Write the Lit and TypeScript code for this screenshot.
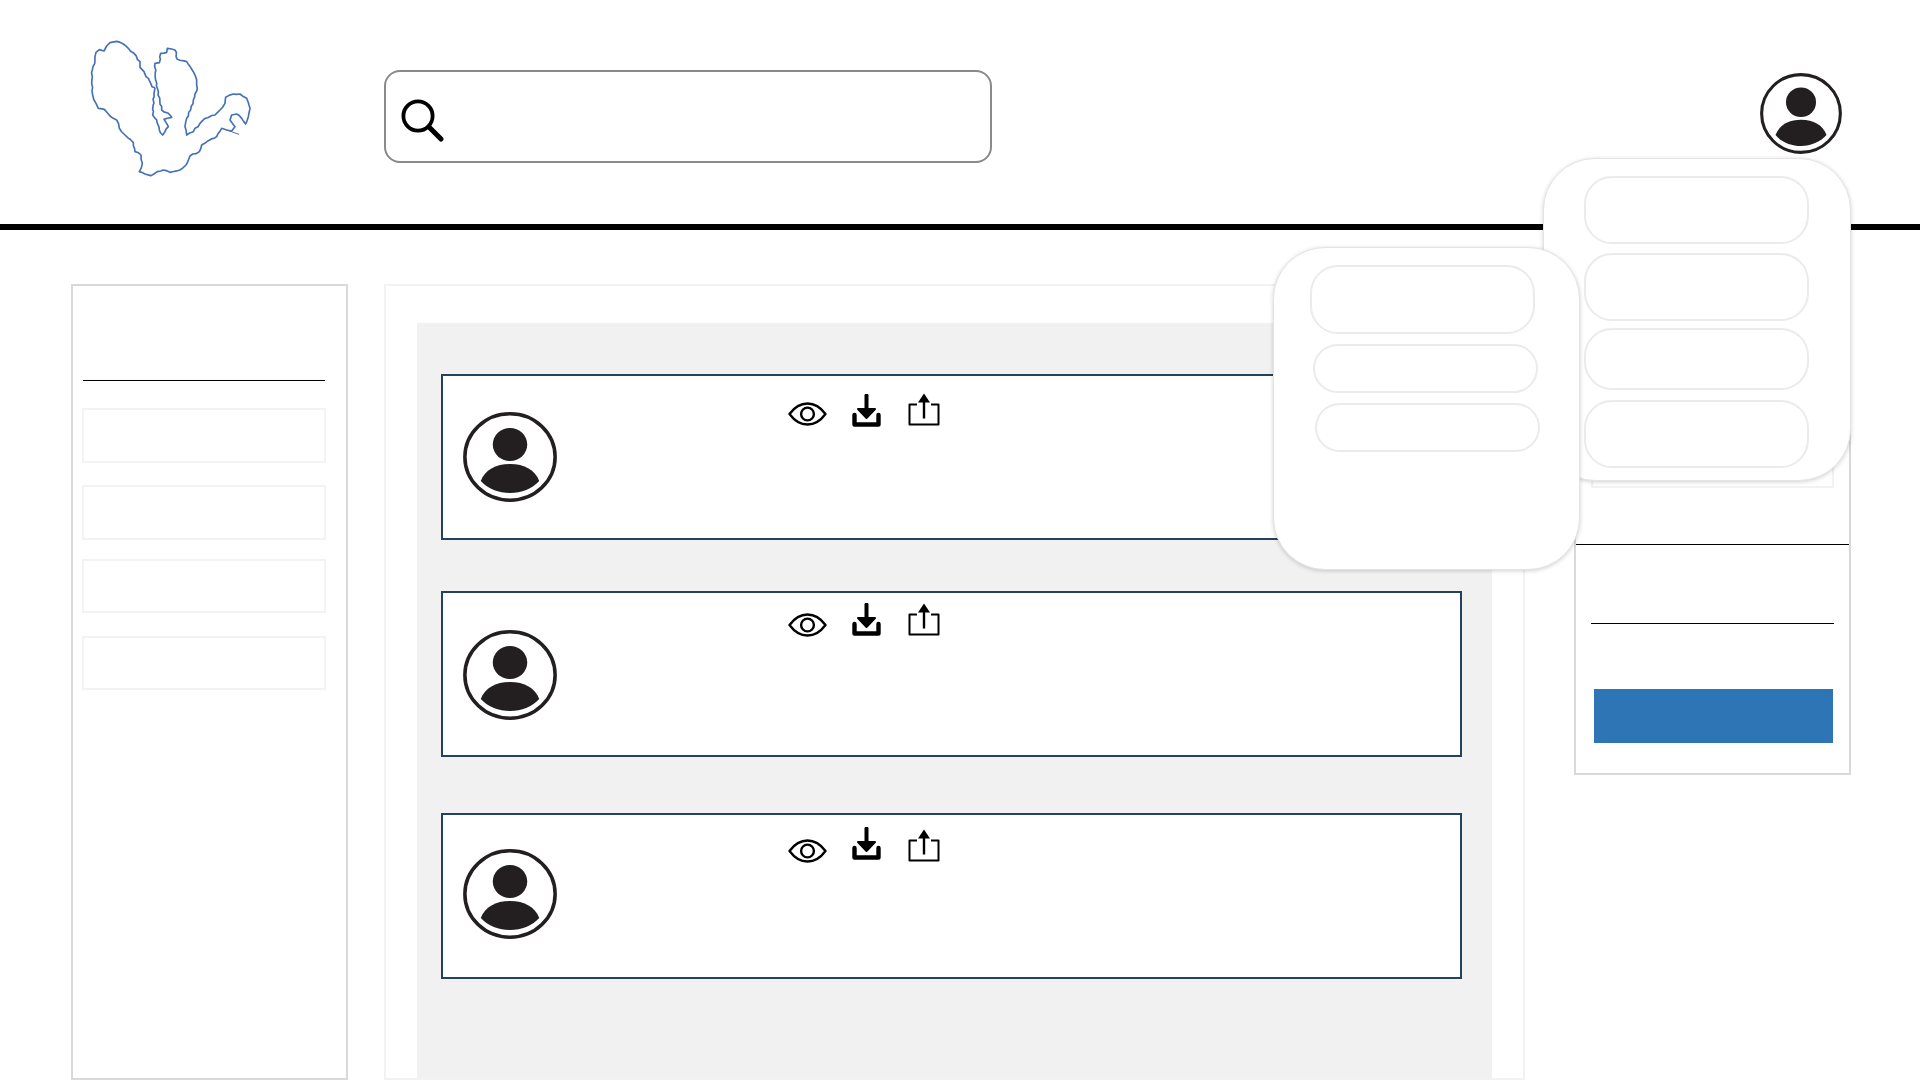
import { LitElement, html, css, svg } from 'lit';
import { customElement } from 'lit/decorators.js';

// outline traced off the reference, in 3x crop coordinates
const LOGO_POINTS: [number, number][] = (
  '285,203 276,200 272,190 265,175 258,170 252,155 240,142 240,125 232,118 222,100 205,85 190,72 170,64 150,68 140,78 132,93 118,89 108,97 105,122 97,150 95,190 98,225 108,250 115,265 133,268 150,288 170,300 178,325 195,345 220,368 225,395 243,405 247,430 238,455 255,462 272,467 292,455 310,450 330,457 360,450 378,435 390,408 418,395 425,375 445,362 470,350 485,325 500,330 515,333 525,320 510,300 515,285 530,282 545,295 557,312 565,290 570,265 560,235 540,222 520,222 497,232 495,250 480,270 465,285 435,295 420,310 400,335 380,345 375,320 380,295 392,270 400,240 412,205 410,180 400,155 380,125 352,118 345,90 322,85 320,97 302,100 298,128 285,130 287,180 305,270 330,285 335,292 312,298 325,320 315,335 308,345 298,330 290,300 278,285 282,220 285,203'
)
  .split(' ')
  .map((p) => p.split(',').map(Number) as [number, number]);

// the logo edge is rough in the reference, so break long segments up with a small wobble
function roughen(points: [number, number][]) {
  const out: string[] = [];
  points.forEach(([x, y], i) => {
    out.push(`${x},${y}`);
    const next = points[i + 1];
    if (!next) return;
    const steps = Math.floor(Math.hypot(next[0] - x, next[1] - y) / 9);
    for (let s = 1; s < steps; s++) {
      const t = s / steps;
      const wx = Math.sin(i * 3.1 + s * 2.3) * 1.8;
      const wy = Math.cos(i * 1.7 + s * 2.9) * 1.8;
      out.push(`${(x + (next[0] - x) * t + wx).toFixed(1)},${(y + (next[1] - y) * t + wy).toFixed(1)}`);
    }
  });
  return out.join(' ');
}

const logoIcon = svg`<svg class="logo" viewBox="0 0 660 510">
  <polyline points=${roughen(LOGO_POINTS)} fill="none" stroke="#4472b8" stroke-width="5" stroke-linejoin="round"></polyline>
  <path d="M500 330L537 343" fill="none" stroke="#4472b8" stroke-width="3"></path>
</svg>`;

const searchIcon = svg`<svg class="search-icon" viewBox="0 0 44 44">
  <circle cx="18" cy="18" r="14.6" fill="none" stroke="#000" stroke-width="3.8"></circle>
  <path d="M29 29L41 41" stroke="#000" stroke-width="5" stroke-linecap="round"></path>
</svg>`;

const avatarIcon = svg`<svg class="avatar-svg" viewBox="0 0 90 90" preserveAspectRatio="none">
  <circle cx="45" cy="45" r="43.2" fill="#fff" stroke="#231f20" stroke-width="3.4"></circle>
  <circle cx="45" cy="32.5" r="16.5" fill="#231f20"></circle>
  <path d="M17 69C21 58 31 52 45 52C59 52 69 58 73 69C66 77 56 81 45 81C34 81 24 77 17 69Z" fill="#231f20"></path>
</svg>`;

const eyeIcon = (top: number) => svg`<svg class="eye" style="margin-top:${top}px" viewBox="0 0 39 24">
  <path d="M1.5 12C7 4.5 13 1.5 19.5 1.5C26 1.5 32 4.5 37.5 12C32 19.5 26 22.5 19.5 22.5C13 22.5 7 19.5 1.5 12Z" fill="none" stroke="#000" stroke-width="2.4" stroke-linejoin="round"></path>
  <circle cx="19.5" cy="12" r="6.4" fill="none" stroke="#000" stroke-width="2.4"></circle>
</svg>`;

const downloadIcon = svg`<svg class="download" viewBox="0 0 29 33">
  <path d="M14.5 1.5V20" stroke="#000" stroke-width="4" stroke-linecap="round"></path>
  <path d="M6 15L14.5 24L23 15Z" fill="#000" stroke="#000" stroke-width="2" stroke-linejoin="round"></path>
  <path d="M2.5 21V30.5H26.5V21" fill="none" stroke="#000" stroke-width="4.4" stroke-linecap="round" stroke-linejoin="round"></path>
</svg>`;

const shareIcon = (top: number) => svg`<svg class="share" style="margin-top:${top}px" viewBox="0 0 32 33">
  <path d="M9 11.5H1.5V31.5H30.5V11.5H23" fill="none" stroke="#000" stroke-width="2" stroke-linejoin="round"></path>
  <path d="M16 8V25.5" stroke="#000" stroke-width="2.4"></path>
  <path d="M16 0.5L22 9.5H10Z" fill="#000"></path>
</svg>`;

@customElement('app-root')
export class AppRoot extends LitElement {
  static styles = css`
    :host {
      display: block;
      position: relative;
      width: 1920px;
      height: 1080px;
      overflow: hidden;
      background: #fff;
      font-family: 'Liberation Sans', sans-serif;
    }

    .topbar {
      box-sizing: border-box;
      display: flex;
      align-items: flex-start;
      height: 230px;
      padding: 20px 78px 0 60px;
      border-bottom: 6px solid #000;
    }

    .logo {
      flex: none;
      width: 220px;
      height: 170px;
    }

    .search {
      box-sizing: border-box;
      display: flex;
      align-items: center;
      width: 608px;
      height: 93px;
      margin: 50px 0 0 104px;
      padding: 6px 0 0 14px;
      background: #fff;
      border: 2px solid #8a8a8a;
      border-radius: 16px;
    }

    .search-icon {
      width: 44px;
      height: 44px;
    }

    .me {
      width: 82px;
      height: 81px;
      margin: 53px 0 0 auto;
    }

    .avatar-svg {
      display: block;
      width: 100%;
      height: 100%;
    }

    .content {
      box-sizing: border-box;
      display: flex;
      align-items: flex-start;
      height: 850px;
      padding: 54px 0 0 71px;
    }

    .sidebar,
    .summary {
      box-sizing: border-box;
      flex: none;
      width: 277px;
      background: #fff;
      border: 2px solid #d9d9d9;
    }

    .sidebar {
      height: 796px;
      padding: 94px 20px 0 9px;
    }

    .rule {
      height: 1px;
      background: #000;
    }

    .sidebar .rule {
      margin: 0 1px;
    }

    .filters {
      display: flex;
      flex-direction: column;
      margin-top: 27px;
    }

    .filter {
      box-sizing: border-box;
      height: 55px;
      border: 2px solid #f3f3f3;
    }

    .filter:nth-child(2) {
      margin-top: 22px;
    }

    .filter:nth-child(3) {
      margin-top: 19px;
      height: 54px;
    }

    .filter:nth-child(4) {
      margin-top: 23px;
      height: 54px;
    }

    .main {
      box-sizing: border-box;
      flex: none;
      width: 1141px;
      height: 796px;
      margin-left: 36px;
      padding: 37px 31px 0;
      border: 2px solid #f2f2f2;
    }

    .well {
      box-sizing: border-box;
      display: flex;
      flex-direction: column;
      gap: 51px;
      height: 100%;
      padding: 51px 30px 0 24px;
      background: #f1f1f1;
    }

    .row {
      box-sizing: border-box;
      flex: none;
      display: flex;
      align-items: flex-start;
      height: 166px;
      padding-left: 20px;
      background: #fff;
      border: 2px solid #24425f;
    }

    .row:nth-child(3) {
      margin-top: 5px;
    }

    .row-avatar {
      flex: none;
      width: 94px;
      height: 90px;
    }

    .actions {
      display: flex;
      align-items: flex-start;
      margin-left: 231px;
    }

    .eye {
      width: 39px;
      height: 24px;
    }

    .download {
      width: 29px;
      height: 33px;
      margin-left: 25px;
    }

    .share {
      width: 32px;
      height: 33px;
      margin-left: 27px;
    }

    .summary {
      height: 491px;
      margin-left: 49px;
      padding-top: 146px;
    }

    .summary-box {
      box-sizing: border-box;
      height: 56px;
      margin: 0 15px;
      border: 2px solid #f2f2f2;
    }

    .summary-rule {
      margin-top: 56px;
    }

    .summary-inner {
      padding: 78px 15px 0;
    }

    .summary-action {
      height: 54px;
      margin: 65px 1px 0 3px;
      background: #2e75b6;
    }

    .popup {
      position: absolute;
      box-sizing: border-box;
      background: #fff;
      border: 1px solid #e4e4e4;
      border-radius: 52px;
      box-shadow: 0 1px 4px rgba(0, 0, 0, 0.18);
    }

    .popup-account {
      left: 1543px;
      top: 158px;
      width: 308px;
      height: 323px;
    }

    .popup-row {
      left: 1273px;
      top: 247px;
      width: 307px;
      height: 323px;
    }

    .pill {
      position: absolute;
      box-sizing: border-box;
      width: 225px;
      background: #fff;
      border: 2px solid #ebebeb;
      border-radius: 28px;
    }
  `;

  // icons and avatar sit at a different height in each row of the reference
  private rows = [
    { avatarTop: 36, iconTop: 18, eyeTop: 8, shareTop: -1 },
    { avatarTop: 37, iconTop: 10, eyeTop: 9.5, shareTop: 0 },
    { avatarTop: 34, iconTop: 12, eyeTop: 11.5, shareTop: 1.5 },
  ];

  // pills sit at slightly different x/y in each menu, so they are placed from data
  private accountPills = [
    { x: 41, y: 18, h: 68 },
    { x: 41, y: 95, h: 68 },
    { x: 41, y: 170, h: 62 },
    { x: 41, y: 242, h: 68 },
  ];
  private rowPills = [
    { x: 37, y: 18, h: 69 },
    { x: 40, y: 97, h: 49 },
    { x: 42, y: 156, h: 49 },
  ];

  private renderPills(pills: { x: number; y: number; h: number }[]) {
    // offsets are measured from the popup's outer edge, its border takes 1px
    return pills.map(
      (p) => html`<div class="pill" style="left:${p.x - 1}px;top:${p.y - 1}px;height:${p.h}px"></div>`
    );
  }

  render() {
    return html`
      <header class="topbar">
        ${logoIcon}
        <div class="search">${searchIcon}</div>
        <div class="me">${avatarIcon}</div>
      </header>

      <div class="content">
        <aside class="sidebar">
          <div class="rule"></div>
          <div class="filters">
            <div class="filter"></div>
            <div class="filter"></div>
            <div class="filter"></div>
            <div class="filter"></div>
          </div>
        </aside>

        <main class="main">
          <div class="well">
            ${this.rows.map(
              (r) => html`
                <div class="row">
                  <div class="row-avatar" style="margin-top:${r.avatarTop}px">${avatarIcon}</div>
                  <div class="actions" style="margin-top:${r.iconTop}px">
                    ${eyeIcon(r.eyeTop)} ${downloadIcon} ${shareIcon(r.shareTop)}
                  </div>
                </div>
              `
            )}
          </div>
        </main>

        <aside class="summary">
          <div class="summary-box"></div>
          <div class="rule summary-rule"></div>
          <div class="summary-inner">
            <div class="rule"></div>
            <div class="summary-action"></div>
          </div>
        </aside>
      </div>

      <div class="popup popup-account">${this.renderPills(this.accountPills)}</div>
      <div class="popup popup-row">${this.renderPills(this.rowPills)}</div>
    `;
  }
}
